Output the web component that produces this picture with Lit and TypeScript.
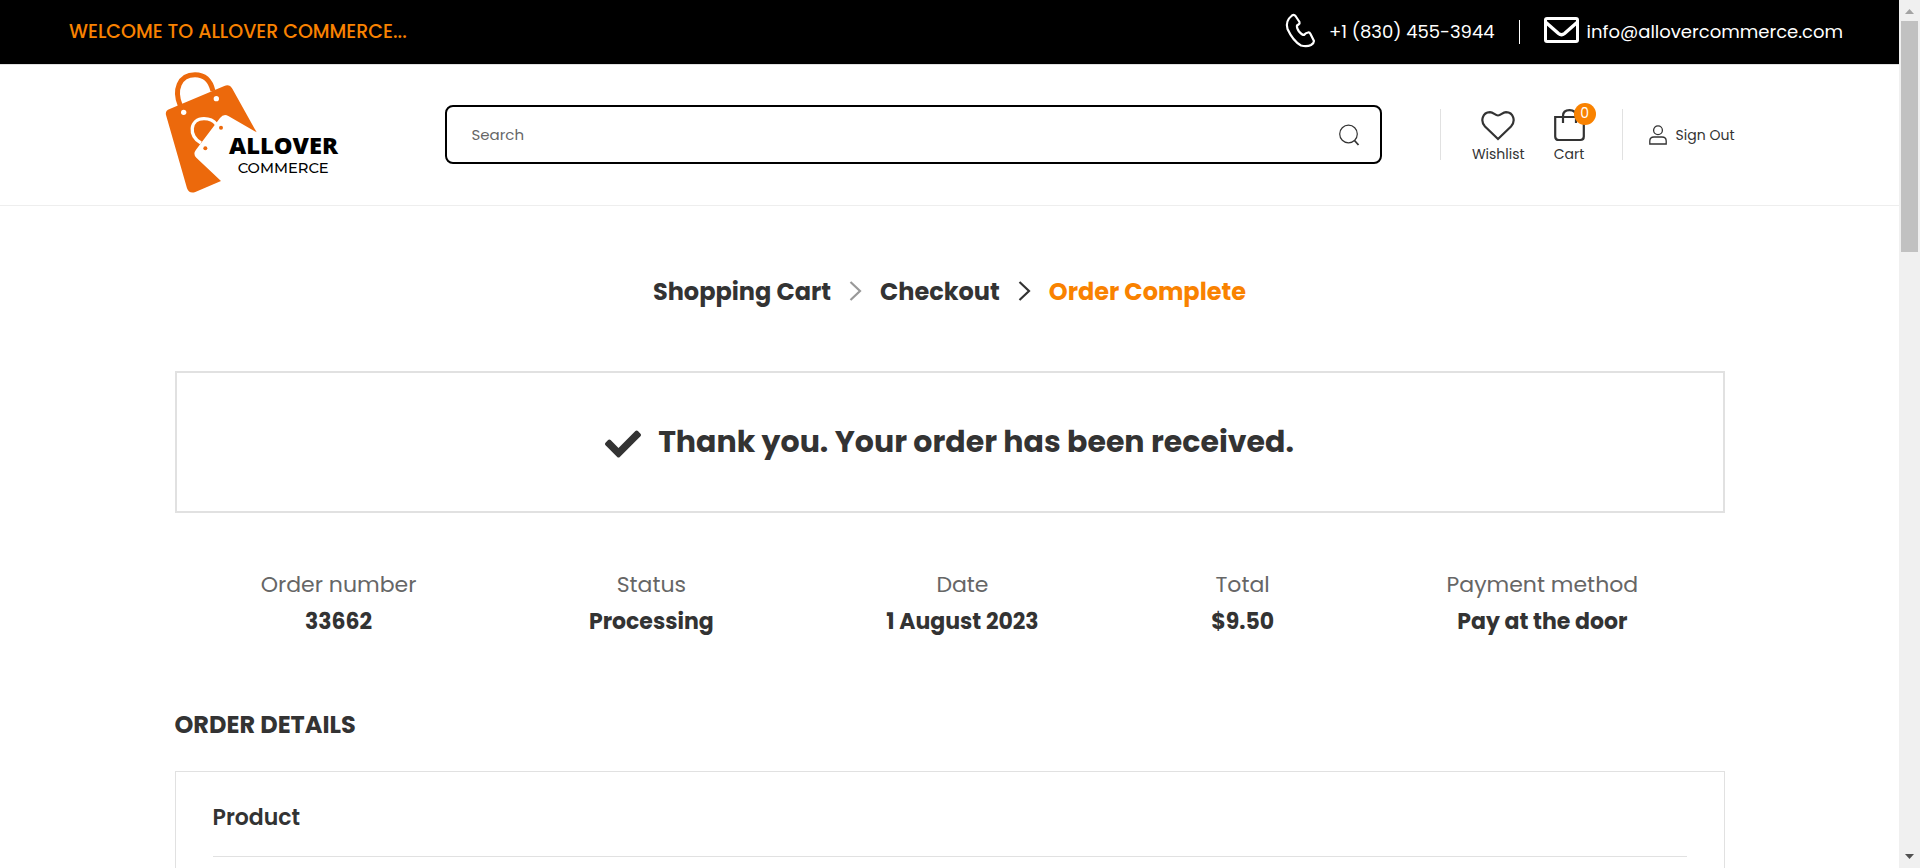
import { LitElement, html, css } from "lit";
import { customElement } from "lit/decorators.js";

interface OrderFact {
  label: string;
  value: string;
}

const facts: OrderFact[] = [
  { label: "Order number", value: "33662" },
  { label: "Status", value: "Processing" },
  { label: "Date", value: "1 August 2023" },
  { label: "Total", value: "$9.50" },
  { label: "Payment method", value: "Pay at the door" },
];

@customElement("shop-logo")
class ShopLogo extends LitElement {
  static styles = css`
    :host { display: block; flex: none; }
    svg { display: block; overflow: visible; }
    .name { font: 800 71px "Open Sans", sans-serif; }
    .kind { font: 500 44px Montserrat, Poppins, sans-serif; }
  `;
  render() {
    return html`
      <svg width="174" height="122" viewBox="46 43 522 366" role="img" aria-label="Allover Commerce">
        <path fill="none" stroke="#ec690c" stroke-width="15" d="M92 138C72 92 88 45 136 45C168 45 184 68 190 94" />
        <path fill="#ec690c" d="M60 148L224 79Q239 72 248 87L321 218L236 169Q222 161 211 175L139 270Q129 283 140 294L214 364L137 397Q118 403 112 386L49 166Q46 153 60 148Z" />
        <path fill="none" stroke="#fff" stroke-width="10" d="M154 250C115 230 120 177 163 177C180 177 192 183 200 194" />
        <circle fill="#fff" cx="200" cy="117" r="8" />
        <circle fill="#fff" cx="102" cy="158" r="8" />
        <circle fill="#ec690c" cx="214" cy="204" r="6" />
        <circle fill="#ec690c" cx="167" cy="266" r="6" />
        <text class="name" x="238" y="282">ALLOVER</text>
        <text class="kind" x="264" y="341">COMMERCE</text>
      </svg>
    `;
  }
}

@customElement("top-bar")
class TopBar extends LitElement {
  static styles = css`
    :host {
      display: flex;
      align-items: center;
      justify-content: space-between;
      height: 64px;
      padding: 0 56px 0 69px;
      box-sizing: border-box;
      background: #000;
      color: #fff;
      font-size: 18px;
      line-height: 24px;
    }
    .welcome { color: #f98200; font-size: 19px; font-weight: 500; }
    .contact { display: flex; align-items: center; }
    a { display: flex; align-items: center; color: inherit; text-decoration: none; }
    svg { display: block; overflow: visible; }
    .phone { gap: 13px; }
    .mail { gap: 8px; }
    .rule { width: 1px; height: 24px; margin: 0 24px; background: #fff; }
  `;
  render() {
    return html`
      <span class="welcome">WELCOME TO ALLOVER COMMERCE...</span>
      <div class="contact">
        <a class="phone" href="tel:+18304553944">
          <svg width="31" height="38" viewBox="0 0 31 38" fill="none" stroke="#fff" stroke-width="2.2" stroke-linejoin="round">
            <path d="M7 2.500Q9 1 10.500 3L14.500 9Q15 10.500 13.500 11.500L12 12.500Q11.500 15 14 18.500Q17 22 19 22Q20.500 20 23 19.500Q24.500 19 25.500 21L29 28Q29 30 26 32Q22 34 16 32.500Q8 28 2.500 16Q0 8 7 2.500Z" />
          </svg>
          <span>+1 (830) 455-3944</span>
        </a>
        <span class="rule"></span>
        <a class="mail" href="mailto:info@allovercommerce.com">
          <svg width="35" height="30" viewBox="0 0 35 30" fill="none" stroke="#fff">
            <rect x="1.500" y="1.500" width="32" height="23" rx="1.500" stroke-width="3" />
            <path d="M2 5.500L14.500 16.500Q17.500 19 20.500 16.500L33 5.500" stroke-width="3.400" />
          </svg>
          <span>info@allovercommerce.com</span>
        </a>
      </div>
    `;
  }
}

@customElement("site-header")
class SiteHeader extends LitElement {
  static styles = css`
    :host {
      display: block;
      border-top: 1px solid #e1e1e1;
      border-bottom: 1px solid #eee;
      color: #333;
      font-size: 14px;
      line-height: 20px;
    }
    .inner {
      display: flex;
      align-items: center;
      height: 139px;
      max-width: 1570px;
      margin: 0 auto;
      padding-bottom: 1px;
    }
    .search {
      display: flex;
      align-items: center;
      flex: 1;
      height: 59px;
      box-sizing: border-box;
      margin: 0 58px 0 106px;
      padding: 0 20px 0 25px;
      border: 2px solid #000;
      border-radius: 8px;
    }
    input {
      flex: 1;
      min-width: 0;
      padding: 0;
      border: 0;
      outline: 0;
      background: none;
      font: inherit;
      font-size: 15px;
      color: #666;
    }
    input::placeholder { color: #666; opacity: 1; }
    button { display: flex; padding: 0; border: 0; background: none; }
    a { color: inherit; text-decoration: none; }
    svg { display: block; }
    .icons {
      display: flex;
      gap: 29px;
      padding: 0 37px 0 31px;
      border-left: 1px solid #e1e1e1;
      border-right: 1px solid #e1e1e1;
    }
    .icons a { display: flex; flex-direction: column; align-items: center; height: 51px; }
    .glyph { position: relative; flex: none; height: 35px; }
    .badge {
      position: absolute;
      top: -6px;
      right: -11px;
      width: 22px;
      height: 22px;
      border-radius: 50%;
      background: #f98200;
      color: #fff;
      line-height: 20px;
      text-align: center;
    }
    .sign { display: flex; align-items: center; gap: 9px; padding-left: 26px; }
  `;
  render() {
    return html`
      <header class="inner">
        <shop-logo></shop-logo>
        <form class="search" role="search">
          <input type="text" placeholder="Search" aria-label="Search" />
          <button type="button" aria-label="Search">
            <svg width="22" height="22" viewBox="0 0 22 22" fill="none" stroke="#333">
              <circle cx="10.500" cy="10" r="8.800" stroke-width="1.200" />
              <path d="M16.500 16.500L20.500 21" stroke-width="1.800" />
            </svg>
          </button>
        </form>
        <nav class="icons">
          <a href="#wishlist">
            <span class="glyph">
              <svg width="34" height="32" viewBox="0 0 34 32" fill="none" stroke="#333" stroke-width="2.200">
                <path d="M17 30L4 17.500C-1 12 1.500 3.500 9 3.200C12.500 3.200 14 6.500 17 6.500C20 6.500 21.500 3.200 25 3.200C32.500 3.500 35 12 30 17.500Z" />
              </svg>
            </span>
            <span>Wishlist</span>
          </a>
          <a href="#cart">
            <span class="glyph">
              <svg width="31" height="33" viewBox="0 2 31 33" fill="none" stroke="#333" stroke-width="2.200">
                <path d="M1.200 10H29.800V29.500Q29.800 33 26.300 33H4.700Q1.200 33 1.200 29.500Z" />
                <path d="M9 16V9Q9 3.200 15.500 3.200Q22 3.200 22 9V16" />
              </svg>
              <span class="badge">0</span>
            </span>
            <span>Cart</span>
          </a>
        </nav>
        <a class="sign" href="#sign-out">
          <svg width="18" height="20" viewBox="0 0 18 20" fill="none" stroke="#333" stroke-width="1.300">
            <circle cx="9" cy="5.200" r="4.400" />
            <path d="M.8 19V16Q.8 12 5 12H13Q17.200 12 17.200 16V19Z" />
          </svg>
          <span>Sign Out</span>
        </a>
      </header>
    `;
  }
}

@customElement("scroll-rail")
class ScrollRail extends LitElement {
  static styles = css`
    :host {
      display: flex;
      flex-direction: column;
      align-items: center;
      flex: none;
      width: 21px;
      background: #f0f0f0;
    }
    svg { display: block; flex: none; }
    .track { flex: 1; align-self: stretch; padding: 0 2px; }
    .thumb { height: 28%; background: #c1c1c1; }
  `;
  render() {
    return html`
      <svg width="21" height="21" viewBox="0 0 21 21"><path fill="#a3a3a3" d="M6 14L10.500 9L15 14Z" /></svg>
      <div class="track"><div class="thumb"></div></div>
      <svg width="21" height="21" viewBox="0 0 21 21"><path fill="#505050" d="M6 7L10.500 12L15 7Z" /></svg>
    `;
  }
}

@customElement("app-root")
class AppRoot extends LitElement {
  static styles = css`
    :host {
      display: flex;
      height: 100vh;
      overflow: hidden;
      background: #fff;
      color: #333;
      font-family: Poppins, Inter, sans-serif;
    }
    .page { flex: 1; min-width: 0; overflow: hidden; }
    .wrap { max-width: 1550px; margin: 0 auto; }
    .steps {
      display: flex;
      align-items: center;
      justify-content: center;
      gap: 18px;
      padding: 69px 0 62px;
      font-size: 24px;
      font-weight: 700;
      line-height: 34px;
    }
    .steps a { color: inherit; text-decoration: none; }
    .steps .current { color: #f98200; }
    .thanks {
      display: flex;
      align-items: center;
      justify-content: center;
      gap: 17px;
      height: 142px;
      box-sizing: border-box;
      margin: 0;
      border: 2px solid #e1e1e1;
      font-size: 30px;
      font-weight: 700;
      line-height: 40px;
    }
    .facts {
      display: flex;
      justify-content: space-around;
      margin: 53px 0 67px;
      text-align: center;
      font-size: 22px;
      line-height: 37px;
    }
    dt { color: #666; }
    dd { margin: 0; font-weight: 700; }
    h2 { margin: 0 0 28px; font-size: 24px; line-height: 36px; font-weight: 700; }
    .details { padding: 26px 37px; border: 1px solid #e1e1e1; }
    table { width: 100%; border-collapse: collapse; }
    th {
      padding: 0 0 18px;
      border-bottom: 1px solid #e1e1e1;
      text-align: left;
      font-size: 22px;
      line-height: 40px;
      font-weight: 600;
    }
    td { height: 80px; }
  `;

  chevron(color: string) {
    return html`
      <svg width="13" height="22" viewBox="0 0 13 22" fill="none" stroke=${color} stroke-width="2.200">
        <path d="M1.500 1L11 10L1.500 19" />
      </svg>
    `;
  }

  render() {
    return html`
      <div class="page">
        <top-bar></top-bar>
        <site-header></site-header>
        <main class="wrap">
          <nav class="steps">
            <a href="#cart">Shopping Cart</a>
            ${this.chevron("#999")}
            <a href="#checkout">Checkout</a>
            ${this.chevron("#333")}
            <a class="current" href="#complete">Order Complete</a>
          </nav>
          <p class="thanks">
            <svg width="36" height="32" viewBox="0 0 512 455" fill="#333">
              <path d="M173.898 439.404l-166.4-166.4c-9.997-9.997-9.997-26.206 0-36.204l36.203-36.204c9.997-9.998 26.207-9.998 36.204 0L192 312.69 432.095 72.596c9.997-9.997 26.207-9.997 36.204 0l36.203 36.204c9.997 9.997 9.997 26.206 0 36.204l-294.4 294.401c-9.998 9.997-26.207 9.997-36.204-.001z" />
            </svg>
            <span>Thank you. Your order has been received.</span>
          </p>
          <dl class="facts">
            ${facts.map((f) => html`<div><dt>${f.label}</dt><dd>${f.value}</dd></div>`)}
          </dl>
          <h2>ORDER DETAILS</h2>
          <section class="details">
            <table>
              <thead><tr><th scope="col">Product</th></tr></thead>
              <tbody><tr><td></td></tr></tbody>
            </table>
          </section>
        </main>
      </div>
      <scroll-rail aria-hidden="true"></scroll-rail>
    `;
  }
}
